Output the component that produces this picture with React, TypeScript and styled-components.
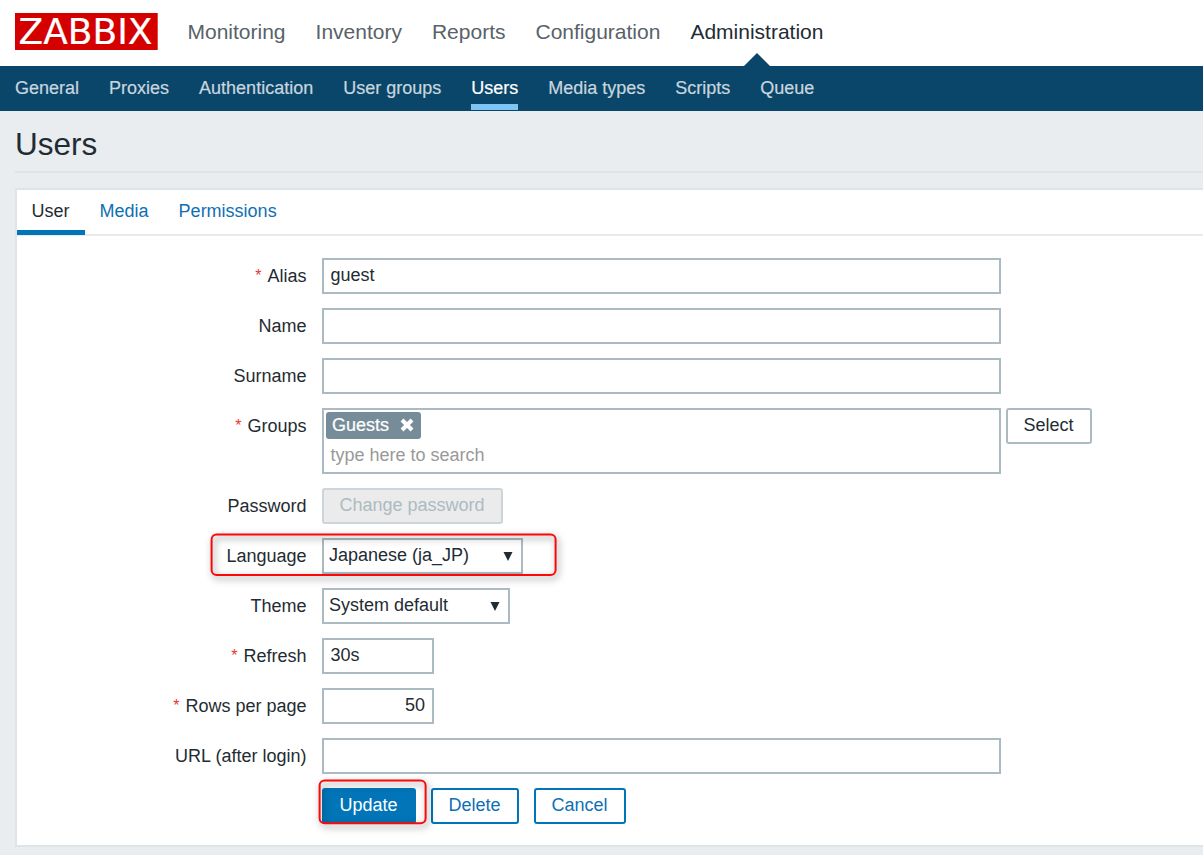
import React from 'react';
import styled, { createGlobalStyle, css } from 'styled-components';

const GlobalStyle = createGlobalStyle`
  * { box-sizing: border-box; }
  html { overflow: hidden; }
  body {
    margin: 0;
    background: #e9edf0;
    color: #1f2c33;
    font: 18px/20px "Liberation Sans", Arial, sans-serif;
  }
  input, button { font: inherit; color: inherit; }
`;

const Page = styled.div`
  height: 855px;
  overflow: hidden;
`;

const Header = styled.header`
  display: flex;
  align-items: flex-start;
  height: 66px;
  padding: 13px 15px 0;
  background: #fff;
`;

const Logo = styled.svg`
  display: block;
  width: 143px;
  height: 37px;
  margin-right: 29.5px;
  overflow: visible;
`;

const MainNav = styled.nav`
  display: flex;
  gap: 30px;
  height: 53px;
`;

const MainLink = styled.a<{ $active?: boolean }>`
  position: relative;
  font-size: 21px;
  line-height: 24px;
  padding-top: 7px;
  color: ${(p) => (p.$active ? '#1f2c33' : '#586269')};
  ${(p) =>
    p.$active &&
    css`
      &::after {
        content: '';
        position: absolute;
        left: 50%;
        bottom: 0;
        margin-left: -13px;
        border: 13px solid transparent;
        border-top: 0;
        border-bottom-color: #0a466a;
      }
    `}
`;

const SubNav = styled.nav`
  display: flex;
  gap: 30px;
  height: 45px;
  padding: 0 15px;
  background: #0a466a;
`;

const SubLink = styled.a<{ $active?: boolean }>`
  height: 44px;
  padding-top: 12px;
  color: ${(p) => (p.$active ? '#fff' : '#c8d6df')};
  border-bottom: 6px solid ${(p) => (p.$active ? '#7fc4f5' : 'transparent')};
  -webkit-text-stroke: 0.2px currentColor;
`;

const Content = styled.main`
  padding: 15px 0 0 15px;
`;

const Title = styled.h1`
  margin: 0 0 15px;
  height: 47px;
  border-bottom: 2px solid #dfe4e7;
  font-size: 31.5px;
  font-weight: 400;
  line-height: 36px;
`;

const Panel = styled.section`
  height: 659px;
  background: #fff;
  border: 2px solid #dfe4e7;
  border-right: 0;
`;

const Tabs = styled.div`
  display: flex;
  height: 46px;
  border-bottom: 2px solid #e6ebee;
`;

const Tab = styled.a<{ $active?: boolean }>`
  height: 45px;
  padding: 11px 15.4px 0 14.6px;
  color: ${(p) => (p.$active ? '#1f2c33' : '#0f6fb5')};
  border-bottom: 5px solid ${(p) => (p.$active ? '#0275b8' : 'transparent')};
`;

const Form = styled.form`
  display: flex;
  flex-direction: column;
  gap: 14px;
  padding: 22px 0 0;
`;

const Row = styled.div`
  position: relative;
  display: grid;
  grid-template-columns: 290px auto;
  column-gap: 15px;
  justify-content: start;
  align-items: start;
`;

const Label = styled.label<{ $required?: boolean }>`
  padding: 8px 0.5px 0 0;
  text-align: right;
  ${(p) =>
    p.$required &&
    css`
      &::before {
        content: '*';
        color: #e33734;
        margin-right: 6px;
        font-size: 16px;
        line-height: 1;
        vertical-align: 1px;
      }
    `}
`;

const Controls = styled.div`
  display: flex;
  align-items: flex-start;
`;

const Field = styled.input<{ $short?: boolean }>`
  display: block;
  width: ${(p) => (p.$short ? 112 : 679)}px;
  height: 36px;
  margin: 0;
  padding: 0 7px 2px 6.5px;
  border: 2px solid #acbbc2;
  border-radius: 0;
  outline: 0;
  background: #fff;
`;

const NumberField = styled(Field)`
  text-align: right;
`;

const MultiSelect = styled.div`
  width: 679px;
  height: 66px;
  padding: 2px;
  border: 2px solid #acbbc2;
`;

const Chip = styled.span`
  display: flex;
  align-items: center;
  justify-content: space-between;
  width: 95px;
  height: 27px;
  padding: 0 6px 2px;
  border-radius: 3px;
  background: #768d99;
  color: #fff;
  -webkit-text-stroke: 0.2px currentColor;
`;

const Placeholder = styled.div`
  padding: 6px 0 0 4.5px;
  color: #999;
`;

type Tone = 'plain' | 'link' | 'primary' | 'disabled';
const tones: Record<Tone, [string, string, string]> = {
  plain: ['#fff', '#acbbc2', '#1f2c33'],
  link: ['#fff', '#0275b8', '#0f6fb5'],
  primary: ['#0275b8', '#0275b8', '#fff'],
  disabled: ['#ebebeb', '#ccd5d9', '#acbbc2'],
};

const Button = styled.button<{ $tone: Tone; $width: number }>`
  width: ${(p) => p.$width}px;
  height: 36px;
  padding: 0 1px 3px 0;
  border-radius: 3px;
  border: 2px solid ${(p) => tones[p.$tone][1]};
  background: ${(p) => tones[p.$tone][0]};
  color: ${(p) => tones[p.$tone][2]};
`;

const SelectButton = styled(Button)`
  margin-left: 5px;
`;

const Dropdown = styled.div<{ $width: number }>`
  display: flex;
  justify-content: space-between;
  width: ${(p) => p.$width}px;
  height: 36px;
  padding: 5px 8px 0 5px;
  border: 2px solid #acbbc2;
  background: #fff;
`;

const Caret = styled.svg`
  width: 10px;
  height: 10px;
  margin-top: 6px;
  fill: #1f2c33;
`;

const Actions = styled(Controls)`
  grid-column: 2;
  gap: 15px;
`;

const Outline = styled.svg<{ $x: number; $y: number }>`
  position: absolute;
  left: ${(p) => p.$x}px;
  top: ${(p) => p.$y}px;
  overflow: visible;
  fill: none;
  stroke: #fb0909;
  stroke-width: 2;
  filter: drop-shadow(2px 3px 3.5px rgba(0, 0, 0, 0.5));
  pointer-events: none;
`;

type HighlightProps = { x: number; y: number; width: number; height: number };

const Highlight = ({ x, y, width, height }: HighlightProps) => (
  <Outline $x={x} $y={y} width={width + 2} height={height + 2}>
    <rect x="0.6" y="0.6" width={width} height={height} rx="5" />
  </Outline>
);

const Arrow = () => (
  <Caret viewBox="0 0 10 10">
    <path d="M0.5 1h9L5 10z" />
  </Caret>
);

const mainItems = ['Monitoring', 'Inventory', 'Reports', 'Configuration', 'Administration'];
const subItems = ['General', 'Proxies', 'Authentication', 'User groups', 'Users', 'Media types', 'Scripts', 'Queue'];
const tabs = ['User', 'Media', 'Permissions'];

export default function App() {
  return (
    <Page>
      <GlobalStyle />
      <Header>
        <Logo viewBox="0 0 143 37" role="img" aria-label="ZABBIX">
          <rect width="142.7" height="37" fill="#d40000" />
          <text x="3.5" y="31.3" fill="#fff" stroke="#fff" strokeWidth="0.2" fontFamily="DejaVu Sans" fontSize="36" textLength="134" lengthAdjust="spacingAndGlyphs">
            ZABBIX
          </text>
        </Logo>
        <MainNav>
          {mainItems.map((t) => (
            <MainLink key={t} $active={t === 'Administration'}>{t}</MainLink>
          ))}
        </MainNav>
      </Header>
      <SubNav>
        {subItems.map((t) => (
          <SubLink key={t} $active={t === 'Users'}>{t}</SubLink>
        ))}
      </SubNav>
      <Content>
        <Title>Users</Title>
        <Panel>
          <Tabs>
            {tabs.map((t) => (
              <Tab key={t} $active={t === 'User'}>{t}</Tab>
            ))}
          </Tabs>
          <Form>
            <Row>
              <Label $required>Alias</Label>
              <Field defaultValue="guest" />
            </Row>
            <Row>
              <Label>Name</Label>
              <Field />
            </Row>
            <Row>
              <Label>Surname</Label>
              <Field />
            </Row>
            <Row>
              <Label $required>Groups</Label>
              <Controls>
                <MultiSelect>
                  <Chip>
                    Guests
                    <svg width="16" height="14" viewBox="0 0 16 14">
                      <path d="M3 2l10 10M13 2L3 12" stroke="#fff" strokeWidth="4" />
                    </svg>
                  </Chip>
                  <Placeholder>type here to search</Placeholder>
                </MultiSelect>
                <SelectButton type="button" $tone="plain" $width={86}>Select</SelectButton>
              </Controls>
            </Row>
            <Row>
              <Label>Password</Label>
              <Button type="button" disabled $tone="disabled" $width={181}>Change password</Button>
            </Row>
            <Row>
              <Label>Language</Label>
              <Dropdown $width={201}>Japanese (ja_JP)<Arrow /></Dropdown>
              <Highlight x={194} y={-4} width={344} height={40.5} />
            </Row>
            <Row>
              <Label>Theme</Label>
              <Dropdown $width={188}>System default<Arrow /></Dropdown>
            </Row>
            <Row>
              <Label $required>Refresh</Label>
              <Field $short defaultValue="30s" />
            </Row>
            <Row>
              <Label $required>Rows per page</Label>
              <NumberField $short defaultValue="50" />
            </Row>
            <Row>
              <Label>URL (after login)</Label>
              <Field />
            </Row>
            <Row>
              <Actions>
                <Button type="button" $tone="primary" $width={94}>Update</Button>
                <Button type="button" $tone="link" $width={88}>Delete</Button>
                <Button type="button" $tone="link" $width={92}>Cancel</Button>
              </Actions>
              <Highlight x={302} y={-8} width={106} height={42.7} />
            </Row>
          </Form>
        </Panel>
      </Content>
    </Page>
  );
}
